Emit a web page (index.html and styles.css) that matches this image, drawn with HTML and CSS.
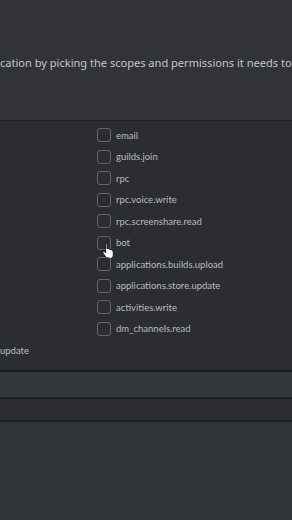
FILE: index.html
```html
<!DOCTYPE html>
<html>
<head>
<meta charset="utf-8">
<link rel="stylesheet" href="styles.css">
</head>
<body>
<div class="page">
  <header class="intro">
    <p class="intro-text">cation by picking the scopes and permissions it needs to function.</p>
  </header>
  <section class="scopes">
    <ul class="scope-list">
      <li class="scope"><span class="box"></span><span class="label">email</span></li>
      <li class="scope"><span class="box"></span><span class="label">guilds.join</span></li>
      <li class="scope"><span class="box"></span><span class="label">rpc</span></li>
      <li class="scope"><span class="box"></span><span class="label">rpc.voice.write</span></li>
      <li class="scope"><span class="box"></span><span class="label">rpc.screenshare.read</span></li>
      <li class="scope hovered"><span class="box"></span><span class="label">bot</span>
        <svg class="cursor" width="13" height="17" viewBox="0 0 12 15"><path d="M3.5 1.2c.7 0 1.2.5 1.2 1.2v4.3l.6-.1c.6-.1 1.1.2 1.3.6.5-.2 1.1 0 1.4.5.5-.2 1.1 0 1.4.6l.1.3c.4 0 .9.4.9 1v3.2c0 1.7-1.3 3-3 3H6c-1 0-1.8-.5-2.4-1.2L1 10.9c-.4-.5-.3-1.2.2-1.5.4-.3 1-.2 1.3.2l.8.9V2.4c0-.7.5-1.2 1.2-1.2z" fill="#fff" stroke="#111" stroke-width=".9"/></svg>
      </li>
      <li class="scope"><span class="box"></span><span class="label">applications.builds.upload</span></li>
      <li class="scope"><span class="box"></span><span class="label">applications.store.update</span></li>
      <li class="scope"><span class="box"></span><span class="label">activities.write</span></li>
      <li class="scope"><span class="box"></span><span class="label">dm_channels.read</span></li>
    </ul>
    <div class="tail">update</div>
  </section>
  <div class="bar bar-light"></div>
  <div class="bar bar-dark"></div>
  <div class="rest"></div>
</div>
</body>
</html>
```
FILE: styles.css
```css
html, body {
  margin: 0;
  padding: 0;
  background: #313438;
}
body {
  width: 292px;
  height: 520px;
  overflow: hidden;
  font-family: "Noto Sans", "Open Sans", sans-serif;
}
.page {
  display: flex;
  flex-direction: column;
  height: 520px;
}
.intro {
  height: 120px;
  background: #313337;
  display: flex;
  align-items: flex-start;
  overflow: hidden;
}
.intro-text {
  margin: 55px 0 0 0;
  white-space: nowrap;
  font-size: 11.05px;
  line-height: 16px;
  color: #c2c6cc;
}
.scopes {
  border-top: 1px solid #1d1e21;
  background: #2b2d30;
  height: 250px;
  box-sizing: border-box;
  padding-top: 7px;
  overflow: hidden;
}
.scope-list {
  list-style: none;
  margin: 0;
  padding: 0 0 0 97px;
  display: flex;
  flex-direction: column;
  gap: 7.5px;
}
.scope {
  position: relative;
  display: flex;
  align-items: center;
  gap: 5px;
  height: 14px;
}
.box {
  width: 14px;
  height: 14px;
  box-sizing: border-box;
  border: 1px solid #63666b;
  border-radius: 3px;
  flex: none;
}
.label {
  font-family: Lato, "Noto Sans", sans-serif;
  font-size: 9.5px;
  color: #b9bcc1;
  white-space: nowrap;
}
.cursor {
  position: absolute;
  left: 5px;
  top: 5px;
}
.tail {
  margin-top: 8px;
  font-family: Lato, "Noto Sans", sans-serif;
  font-size: 9.5px;
  line-height: 14px;
  color: #b9bcc1;
}
.bar {
  flex: none;
  border-top: 2px solid #1d1e21;
}
.bar-light {
  height: 25px;
  background: #35383b;
}
.bar-dark {
  height: 21px;
  background: #2b2d30;
}
.rest {
  flex: 1;
  border-top: 2px solid #1d1e21;
  background: #323538;
}
```
